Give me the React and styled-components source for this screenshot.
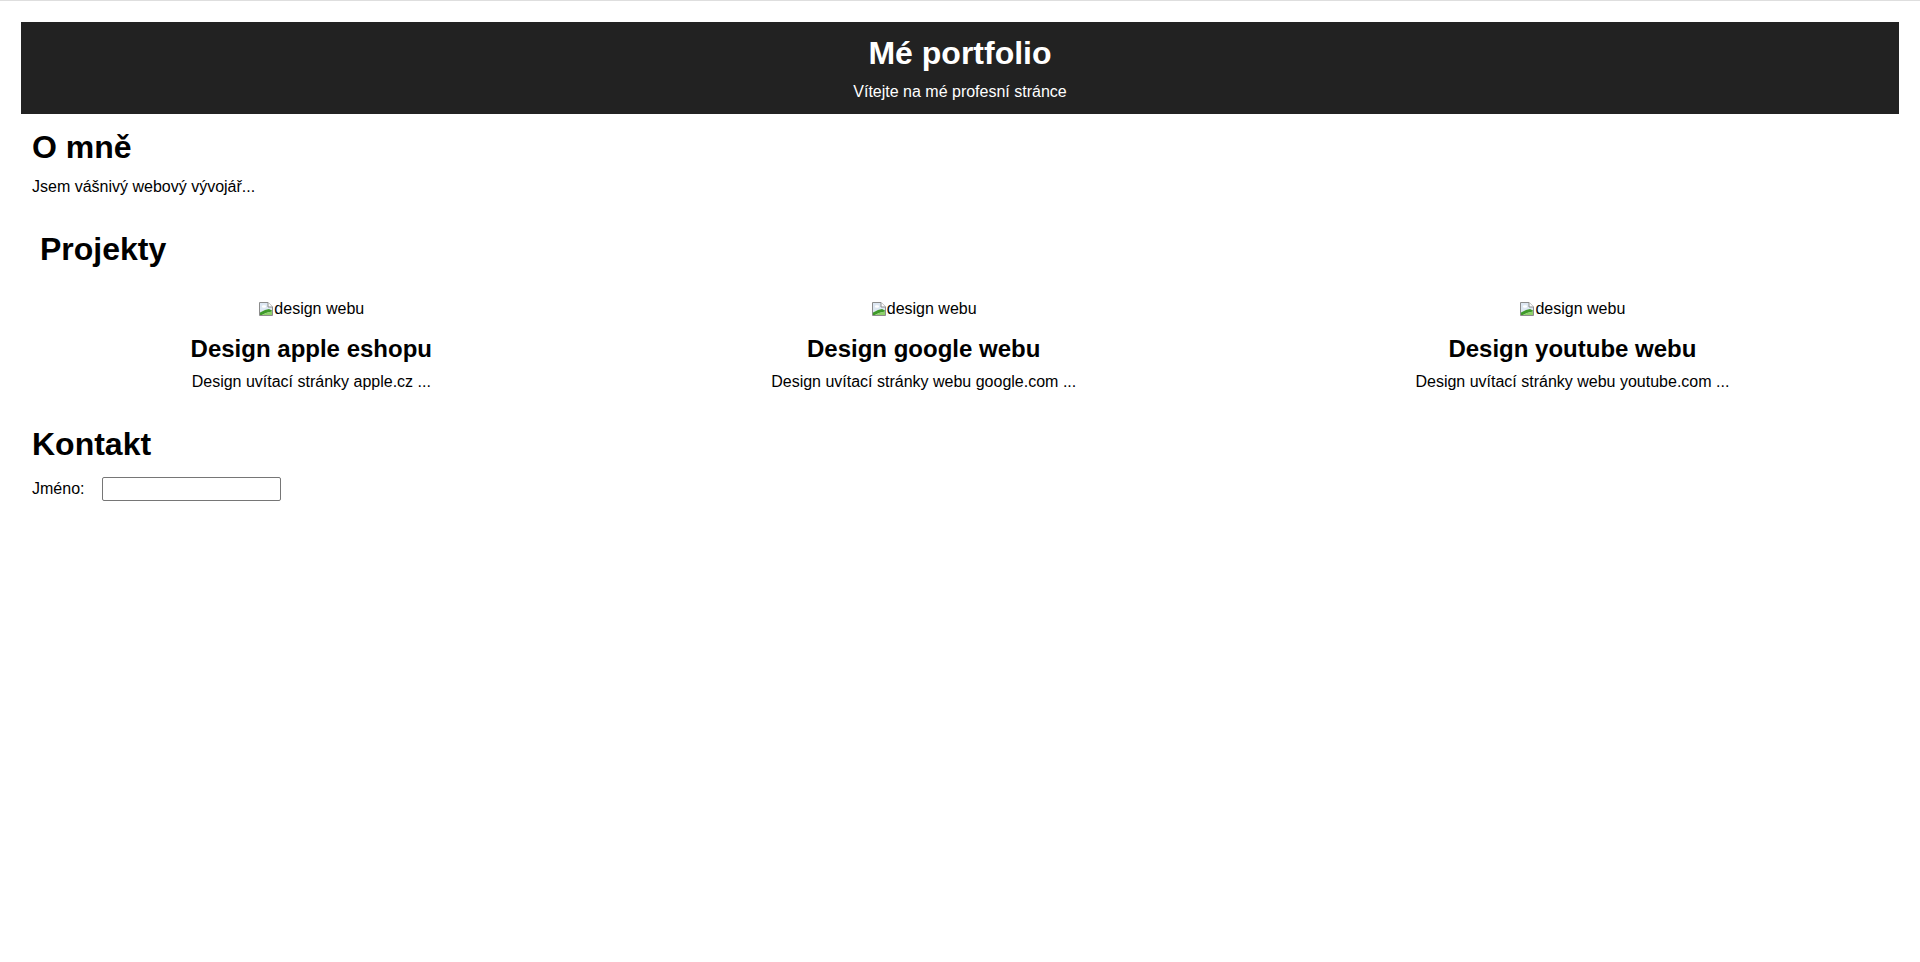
import React from "react";
import styled, { createGlobalStyle } from "styled-components";

const GlobalStyle = createGlobalStyle`
    body {
        margin: 0;
        background: #fff;
        color: #000;
        font-family: "Liberation Sans", Arial, sans-serif;
        font-size: 16px;
    }
`

const Page = styled.div`
    border-top: 1px solid #dedede;
    padding: 21px 21px 0;
`

const Header = styled.header`
    background-color: #222222;
    color: #fff;
    text-align: center;
    padding: 13px 0 13px;

    h1 {
        margin: 0 0 10.5px;
        font-size: 32px;
        line-height: 37px;
    }

    p {
        margin: 0;
        line-height: 18.5px;
    }
`

const Section = styled.section`
    margin-top: ${p => p.$top}px;
    padding-left: ${p => p.$indent}px;
`

const Heading = styled.h1`
    margin: 0;
    padding-left: ${p => p.$shift || 0}px;
    font-size: 32px;
    line-height: 37px;
    font-weight: bold;
`

const Text = styled.p`
    margin: 11.5px 0 0;
    line-height: 18.5px;
`

const Projects = styled.div`
    display: flex;
    justify-content: space-around;
    margin-top: 31.5px;
`

const Card = styled.div`
    text-align: center;

    h2 {
        margin: 14px 0 0;
        font-size: 24px;
        line-height: 27.5px;
    }

    p {
        margin: 11px 0 0;
        line-height: 18.5px;
    }
`

const BrokenImage = styled.span`
    display: inline-flex;
    align-items: center;
    line-height: 18.5px;

    svg {
        display: block;
        flex: none;
    }
`

const FormRow = styled.div`
    display: flex;
    align-items: center;
    gap: 18px;
    margin-top: 14px;

    label {
        line-height: 18.5px;
    }

    input {
        box-sizing: border-box;
        width: 179px;
        height: 24px;
        border: 1px solid #767676;
        border-radius: 2px;
        padding: 1px 2px;
        font: 16px "Liberation Sans", Arial, sans-serif;
        margin: 0;
    }
`

const BrokenIcon = () => (
    <svg width="16" height="16" viewBox="0 0 16 16">
        <path d="M1.5 1.5 H10 L14.5 6 V14.5 H1.5 Z" fill="#dde7f2" stroke="#8c8c8c" />
        <path d="M10 1.5 V6 H14.5" fill="#fff" stroke="#8c8c8c" />
        <ellipse cx="6" cy="5.5" rx="2.2" ry="1.3" fill="#fff" />
        <path d="M2 14 V11.5 L7 9 L11 8 L14 9.5 V10.5 L8 12 L4 14 Z" fill="#3f9a2a" />
        <path d="M4 14 L8 12 L14 10.5 V14 Z" fill="#8fd16a" />
    </svg>
)

const projects = [
    { title: "Design apple eshopu", text: "Design uvítací stránky apple.cz ..." },
    { title: "Design google webu", text: "Design uvítací stránky webu google.com ..." },
    { title: "Design youtube webu", text: "Design uvítací stránky webu youtube.com ..." },
]

export default function App() {
    return (
        <>
            <GlobalStyle />
            <Page>
                <Header>
                    <h1>Mé portfolio</h1>
                    <p>Vítejte na mé profesní stránce</p>
                </Header>

                <Section $top={15} $indent={11}>
                    <Heading>O mně</Heading>
                    <Text>Jsem vášnivý webový vývojář...</Text>
                </Section>

                <Section $top={35} $indent={0}>
                    <Heading $shift={19}>Projekty</Heading>
                    <Projects>
                        {projects.map(p => (
                            <Card key={p.title}>
                                <BrokenImage>
                                    <BrokenIcon />
                                    design webu
                                </BrokenImage>
                                <h2>{p.title}</h2>
                                <p>{p.text}</p>
                            </Card>
                        ))}
                    </Projects>
                </Section>

                <Section $top={34} $indent={11}>
                    <Heading>Kontakt</Heading>
                    <FormRow>
                        <label htmlFor="jmeno">Jméno:</label>
                        <input id="jmeno" type="text" />
                    </FormRow>
                </Section>
            </Page>
        </>
    );
}
